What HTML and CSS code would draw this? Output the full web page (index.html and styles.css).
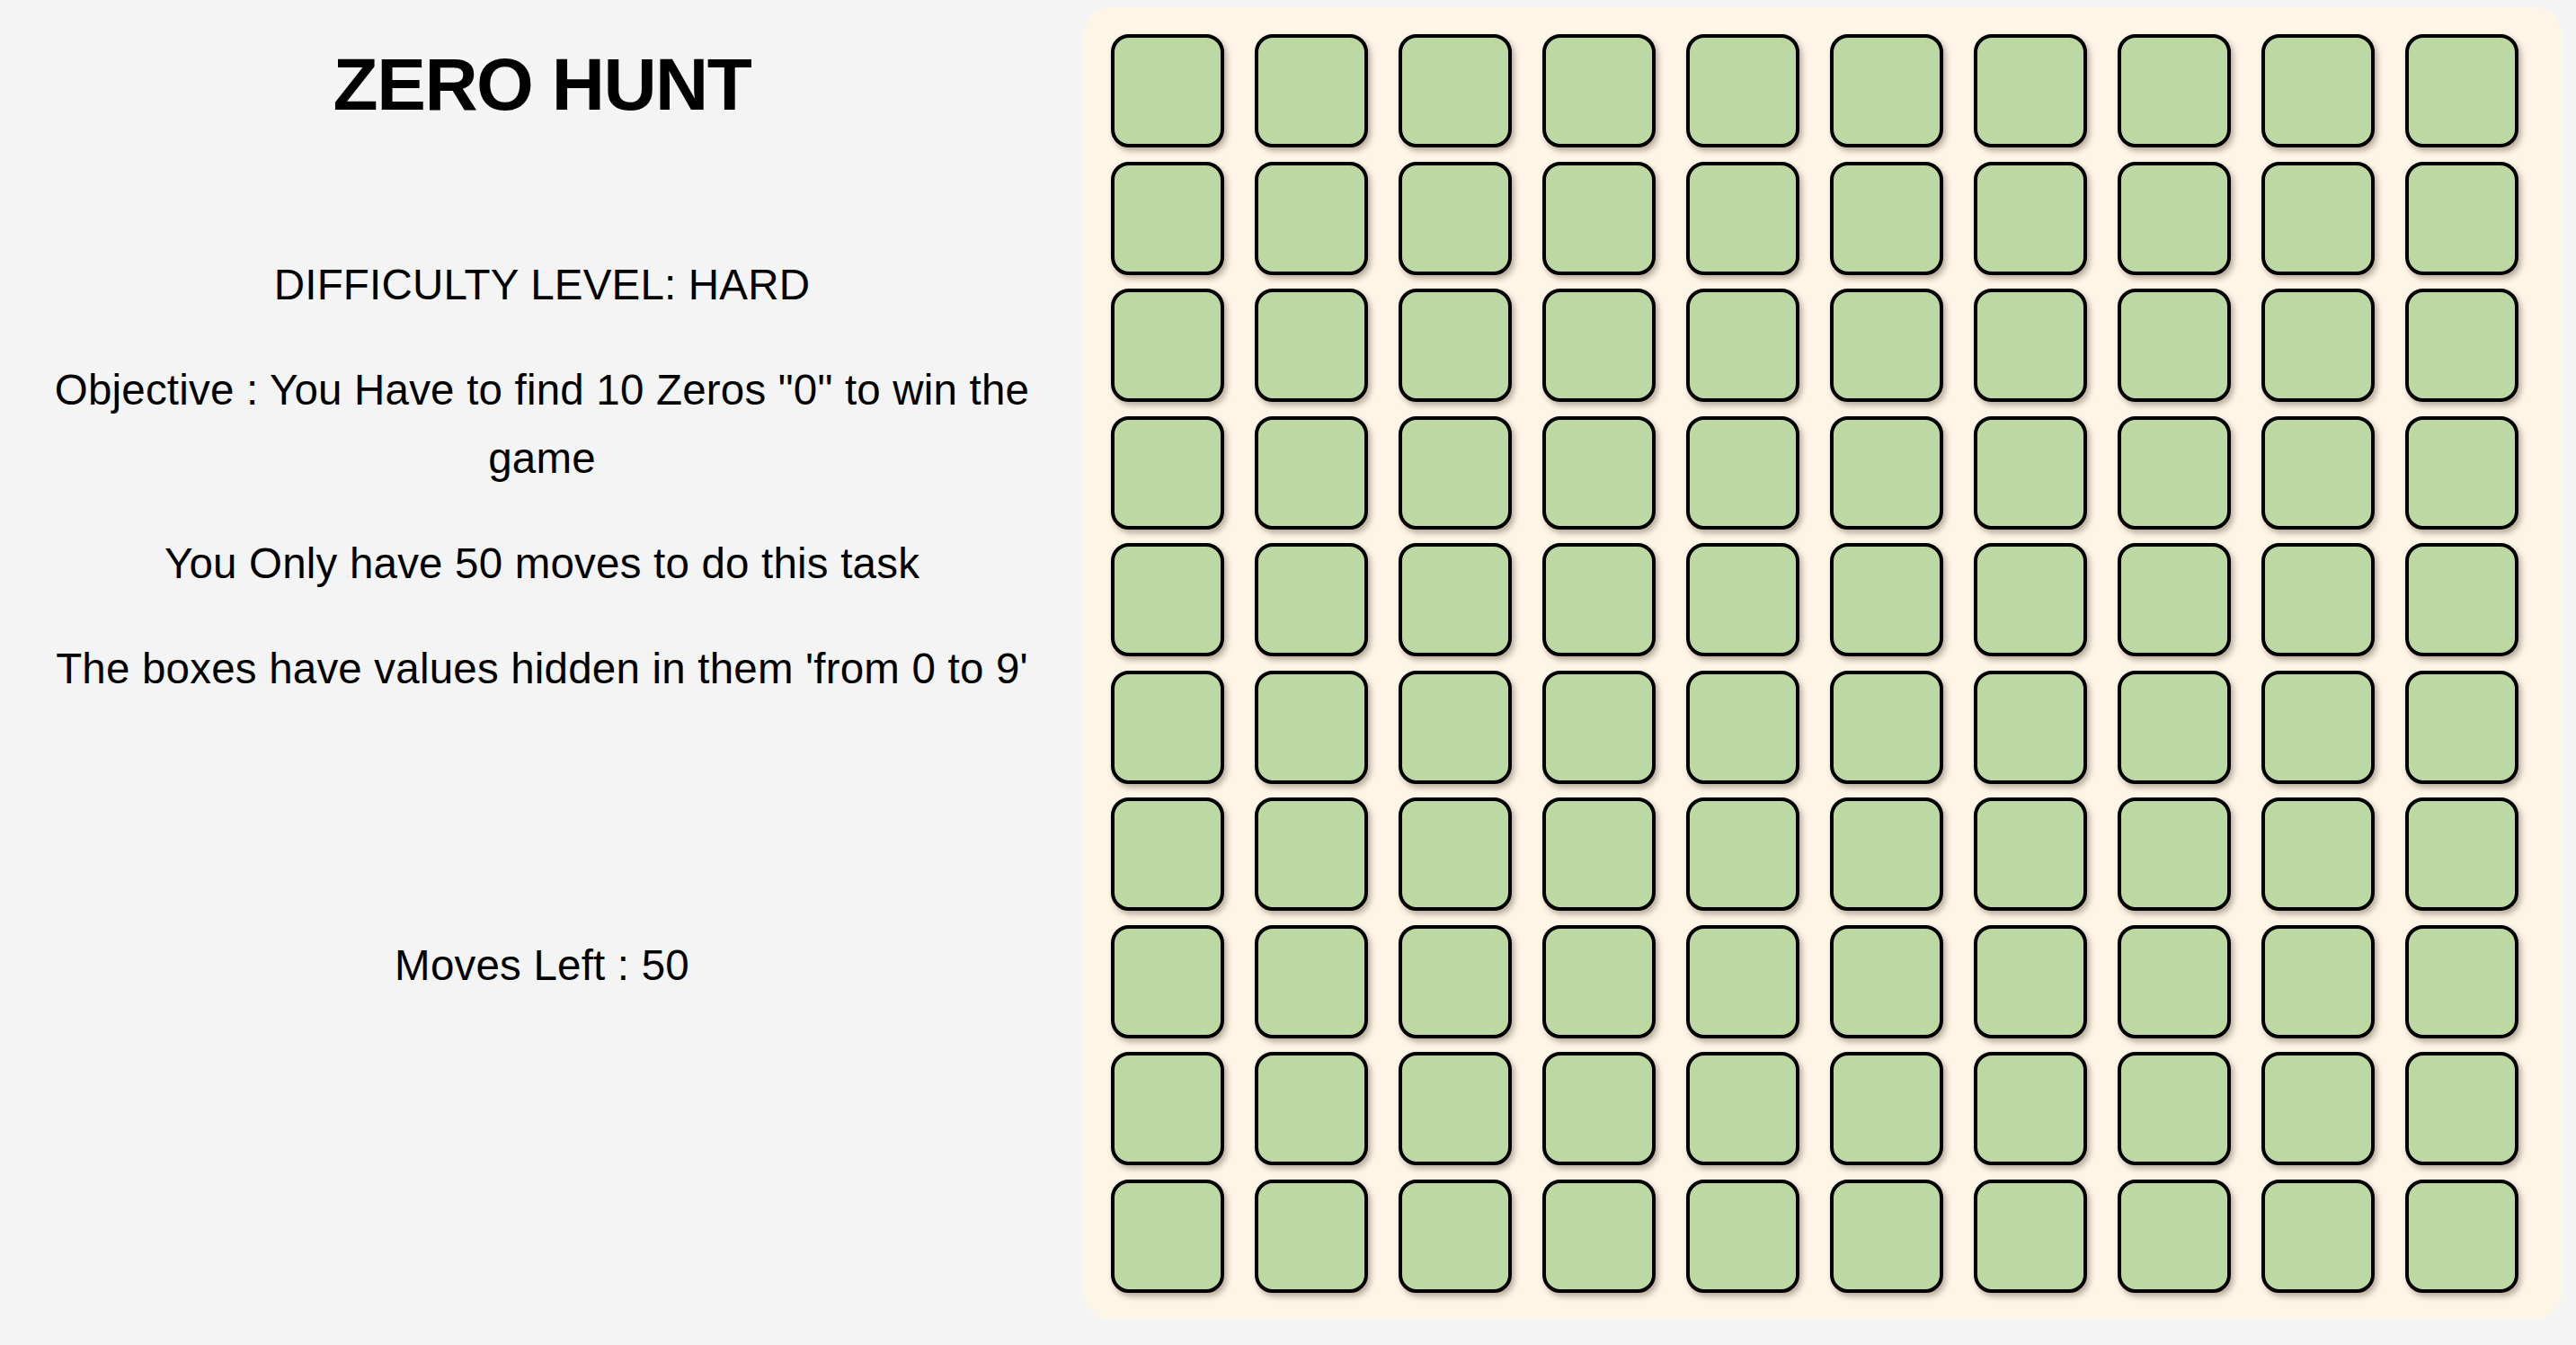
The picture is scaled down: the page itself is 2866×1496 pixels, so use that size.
FILE: index.html
```html
<!DOCTYPE html>
<html lang="en">
<head>
<meta charset="utf-8">
<title>Zero Hunt</title>
<link rel="stylesheet" href="styles.css">
</head>
<body>
<div class="page">
  <section class="info">
    <h1 class="title">ZERO HUNT</h1>
    <p class="line level">DIFFICULTY LEVEL: HARD</p>
    <p class="line">Objective : You Have to find 10 Zeros "0" to win the game</p>
    <p class="line">You Only have 50 moves to do this task</p>
    <p class="line">The boxes have values hidden in them 'from 0 to 9'</p>
    <p class="line moves">Moves Left : 50</p>
  </section>
  <main class="board">
    <div class="grid" id="grid"></div>
  </main>
</div>
<script>
  var g = document.getElementById('grid');
  for (var i = 0; i < 100; i++) {
    var b = document.createElement('div');
    b.className = 'box';
    g.appendChild(b);
  }
</script>
</body>
</html>
```

FILE: styles.css
```css
* { box-sizing: border-box; }

html, body {
  margin: 0;
  padding: 0;
  background: #f4f4f4;
}

body {
  font-family: "Liberation Sans", Arial, Helvetica, sans-serif;
  color: #000;
}

.page {
  display: flex;
  align-items: flex-start;
  padding-top: 8px;
}

.info {
  width: 1206px;
  flex: 0 0 1206px;
  display: flex;
  flex-direction: column;
  align-items: center;
  text-align: center;
}

.title {
  margin: 45px 0 0 0;
  font-size: 82px;
  line-height: 82px;
  font-weight: 700;
  letter-spacing: -1.5px;
}

.line {
  margin: 41px 0 0 0;
  font-size: 47.5px;
  line-height: 76px;
  letter-spacing: 0.2px;
  width: 100%;
}

.level {
  margin-top: 144px;
}

.moves {
  margin-top: 254px;
}

.board {
  width: 1644px;
  flex: 0 0 1644px;
  height: 1460px;
  background: #fdf5e6;
  border-radius: 30px;
  padding: 30px 47px 30px 30px;
}

.grid {
  display: grid;
  grid-template-columns: repeat(10, 126px);
  grid-auto-rows: 126px;
  column-gap: 34px;
  row-gap: 15.5px;
}

.box {
  background: #bcd9a4;
  border: 4px solid #000;
  border-radius: 20px;
  box-shadow: 3px 4px 6px rgba(60, 40, 20, 0.35);
}
```
